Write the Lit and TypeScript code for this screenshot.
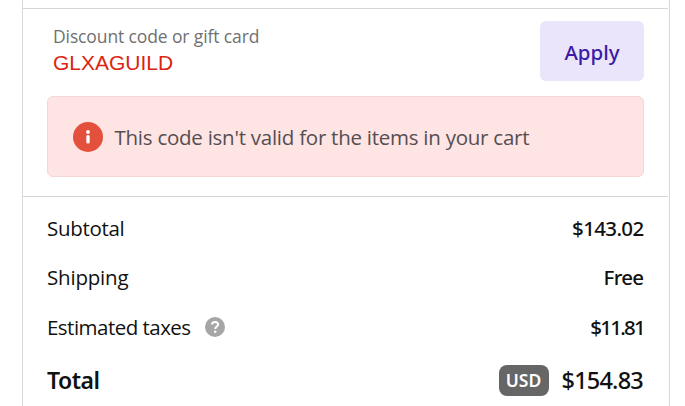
import { LitElement, html, css } from "lit";
import { customElement } from "lit/decorators.js";

@customElement("app-root")
class AppRoot extends LitElement {
  static styles = css`
    :host {
      display: block;
      height: 406px;
      overflow: hidden;
      background: #fff;
      color: #111;
      font: 400 20.5px/30px "Open Sans", "Noto Sans", sans-serif;
      white-space: nowrap;
    }
    .panel {
      box-sizing: border-box;
      width: 648px;
      height: 406px;
      margin-left: 22px;
      padding-top: 8px;
      border: solid #d9d9d9;
      border-width: 0 1px;
    }
    .discount {
      box-sizing: border-box;
      width: 645px;
      height: 189px;
      padding: 12px 24px 0;
      border: solid #d6d6d6;
      border-width: 1px 0;
    }
    .entry {
      display: flex;
      justify-content: space-between;
      width: 597px;
      height: 60px;
    }
    .field { padding: 3px 0 0 6px; }
    .label {
      font-size: 17.5px;
      line-height: 24px;
      letter-spacing: -0.12px;
      color: #707070;
    }
    .code {
      padding-top: 2px;
      font: 21px/26px "Liberation Sans", Arial, sans-serif;
      color: #db2412;
    }
    .apply {
      width: 104px;
      height: 60px;
      padding: 2px 0 0;
      border: 0;
      border-radius: 6px;
      background: #ebe5fc;
      color: #3a1ba6;
      font: 500 20.5px/30px "Noto Sans", sans-serif;
    }
    .alert {
      box-sizing: border-box;
      display: flex;
      align-items: center;
      width: 597px;
      height: 81px;
      margin-top: 15px;
      padding-left: 25px;
      border: 1px solid #f3d6d6;
      border-radius: 6px;
      background: #ffe4e4;
      color: #544e51;
    }
    .alert svg { margin-right: 11.5px; }
    .message { letter-spacing: -0.25px; padding-top: 1px; }
    .summary { width: 597px; padding: 16px 0 0 24px; }
    .row {
      display: flex;
      align-items: center;
      justify-content: space-between;
      height: 30px;
      margin-bottom: 19px;
    }
    .row.taxes { margin: 20px 0 23px; }
    .name { display: flex; align-items: center; }
    .subtotal { letter-spacing: -0.3px; }
    .shipping { letter-spacing: -0.2px; }
    .estimated { letter-spacing: -0.52px; }
    .help { margin-left: 14px; }
    .amount {
      font-family: "Noto Sans", sans-serif;
      font-weight: 500;
      letter-spacing: -0.65px;
      margin-right: 0.5px;
    }
    .tax { letter-spacing: -1.75px; margin-right: 0; }
    .total {
      font: 600 23px/30px "Noto Sans", sans-serif;
      letter-spacing: -0.5px;
    }
    .due { display: flex; align-items: center; }
    .currency {
      width: 50px;
      height: 31px;
      margin-right: 13px;
      border-radius: 8px;
      background: #666;
      color: #fff;
      font: 600 17.5px/31px "Noto Sans", sans-serif;
      text-align: center;
    }
    .sum { font-size: 23.5px; letter-spacing: -0.8px; margin-right: 1px; }
  `;

  render() {
    return html`
      <main class="panel">
        <section class="discount">
          <div class="entry">
            <div class="field">
              <div class="label">Discount code or gift card</div>
              <div class="code">GLXAGUILD</div>
            </div>
            <button class="apply">Apply</button>
          </div>
          <div class="alert">
            <svg width="30" height="30" viewBox="0 0 30 30">
              <circle cx="15" cy="15" r="15" fill="#e3503b" />
              <circle cx="15" cy="10" r="1.9" fill="#fff" />
              <rect x="13.3" y="13" width="3.4" height="8.4" rx="1.5" fill="#fff" />
            </svg>
            <span class="message">This code isn't valid for the items in your cart</span>
          </div>
        </section>
        <section class="summary">
          <div class="row">
            <span class="subtotal">Subtotal</span>
            <span class="amount">$143.02</span>
          </div>
          <div class="row">
            <span class="shipping">Shipping</span>
            <span class="amount">Free</span>
          </div>
          <div class="row taxes">
            <span class="name">
              <span class="estimated">Estimated taxes</span>
              <svg class="help" width="20" height="20" viewBox="0 0 20 20">
                <circle cx="10" cy="10" r="10" fill="#a6a6a6" />
                <path d="M7 7.6C7 5.8 8.3 4.9 10 4.9s3.1 1 3.1 2.6c0 2-2.8 2.2-2.8 4.4" fill="none" stroke="#fff" stroke-width="2" />
                <circle cx="10.2" cy="14.7" r="1.3" fill="#fff" />
              </svg>
            </span>
            <span class="amount tax">$11.81</span>
          </div>
          <div class="row">
            <span class="total">Total</span>
            <span class="due">
              <span class="currency">USD</span>
              <span class="amount sum">$154.83</span>
            </span>
          </div>
        </section>
      </main>
    `;
  }
}
